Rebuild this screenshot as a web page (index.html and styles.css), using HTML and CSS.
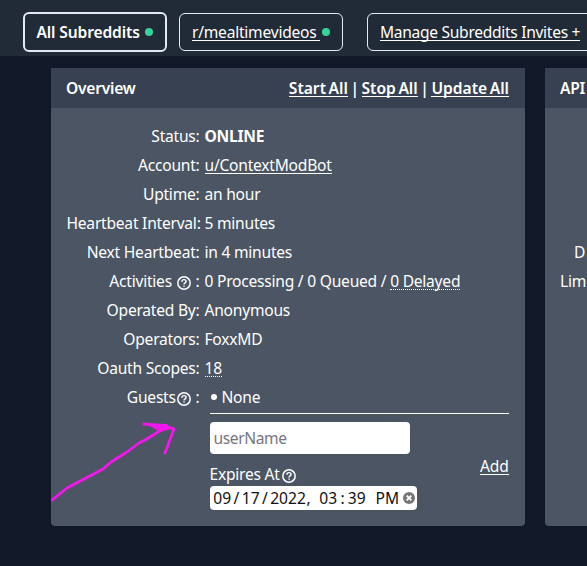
FILE: index.html
```html
<!DOCTYPE html>
<html lang="en">
<head>
<meta charset="utf-8">
<title>Overview</title>
<link rel="stylesheet" href="styles.css">
</head>
<body>
<svg class="defs" width="0" height="0"><symbol id="help" viewBox="0 0 14 14"><circle cx="7" cy="7" r="6.2" fill="none" stroke="currentColor" stroke-width="1.5"/><path d="M4.9 5.7C4.9 4.4 5.8 3.6 7 3.6S9.1 4.4 9.1 5.5C9.1 6.9 7 6.9 7 8.5" fill="none" stroke="currentColor" stroke-width="1.4"/><path d="M6.3 9.4h1.4v1.3H6.3z" fill="currentColor"/></symbol></svg>
<nav class="tabs">
  <a class="tab active"><span>All Subreddits</span><i class="dot"></i></a>
  <a class="tab"><span class="link">r/mealtimevideos&nbsp;</span><i class="dot"></i></a>
  <a class="tab invites"><span class="link">Manage Subreddits Invites +</span></a>
</nav>
<main class="panels">
  <section class="panel">
    <header class="head"><span>Overview</span><span class="actions"><a class="link">Start All</a> | <a class="link">Stop All</a> | <a class="link">Update All</a></span></header>
    <div class="rows">
      <span class="label">Status:</span><b class="value">ONLINE</b>
      <span class="label">Account:</span><span class="value"><a class="link">u/ContextModBot</a></span>
      <span class="label">Uptime:</span><span class="value">an hour</span>
      <span class="label">Heartbeat Interval:</span><span class="value">5 minutes</span>
      <span class="label">Next Heartbeat:</span><span class="value">in 4 minutes</span>
      <span class="label">Activities <svg class="help"><use href="#help"/></svg> :</span><span class="value">0 Processing / 0 Queued / <span class="dotted">0 Delayed</span></span>
      <span class="label">Operated By:</span><span class="value">Anonymous</span>
      <span class="label">Operators:</span><span class="value">FoxxMD</span>
      <span class="label">Oauth Scopes:</span><span class="value"><span class="dotted">18</span></span>
      <span class="label">Guests<svg class="help"><use href="#help"/></svg> :</span>
      <div class="guests">
        <div class="none"><i class="bullet"></i>None</div>
        <div class="form">
          <div class="fields">
            <input class="user" placeholder="userName">
            <div class="expires">Expires At<svg class="help"><use href="#help"/></svg></div>
            <div class="date"><span class="two">09</span><span class="sep">/</span><span class="two">17</span><span class="sep">/</span><span class="year">2022</span><span class="comma">,</span><span class="two">03</span><span class="sep">:</span><span class="two">39</span><span class="pm">PM</span><svg class="clear" viewBox="0 0 12 12"><circle cx="6" cy="6" r="6" fill="#777"/><path d="M3.7 3.7l4.6 4.6M8.3 3.7L3.7 8.3" stroke="#fff" stroke-width="1.7"/></svg></div>
          </div>
          <a class="link add">Add</a>
        </div>
      </div>
    </div>
    <svg class="arrow" viewBox="0 0 128 82"><path d="M1 79L16 67L52 48L60 41L76 31L88 22L94 19L112 8M93 3L117 6L123 8L114 32" fill="none" stroke="#f316ed" stroke-width="2.8" stroke-linecap="square" stroke-linejoin="round"/><path d="M94 2L116 3L118 6L124 7L109 11Z" fill="#f316ed"/></svg>
  </section>
  <section class="panel">
    <header class="head"><span>API</span></header>
    <div class="limits"><span class="delta">D</span><span>Lim</span></div>
  </section>
</main>
</body>
</html>
```
FILE: styles.css
```css
* { box-sizing: border-box; }
body { margin: 0; width: 587px; height: 566px; overflow: hidden; background: #111827; color: #fff; font: 15.6px/24px "Noto Sans", sans-serif; letter-spacing: -0.24px; white-space: nowrap; }
.defs { display: block; position: absolute; }
.tabs { height: 56px; overflow: hidden; padding: 12px 0 0 23px; display: flex; align-items: flex-start; background: #212a37; }
.tab { flex: none; display: flex; align-items: center; justify-content: space-between; width: 164px; height: 38px; margin: 1px 0 0 12px; padding: 0 12px; border: 1px solid #e5e9f5; border-radius: 6px; }
.active { width: 144px; height: 40px; margin: 0; padding: 0 12px 0 11.5px; border-width: 2px; font-weight: 600; letter-spacing: -0.14px; }
.invites { width: 240px; margin-left: 24px; letter-spacing: -0.31px; }
.dot { flex: none; width: 8px; height: 8px; border-radius: 50%; background: #34d399; }
.link { display: inline-block; height: 21px; line-height: 24px; border-bottom: 1px solid; }
.tab .link { margin-top: -3px; }
.panels { display: flex; gap: 20px; overflow: hidden; padding: 12px 0 0 51px; }
.panel { position: relative; flex: none; width: 474px; height: 458px; background: #4b5563; border-radius: 0 0 4px 4px; overflow: hidden; }
.head { display: flex; justify-content: space-between; height: 40px; padding: 8px 16px 8px 15px; background: #374151; font-weight: 600; }
.actions { word-spacing: -1.5px; letter-spacing: 0; }
.rows { display: grid; grid-template-columns: 133px 304px; column-gap: 5px; grid-template-rows: repeat(9, 29px) auto; padding: 16px 16px 0 15.5px; }
.label { text-align: right; }
.help { width: 14px; height: 14px; vertical-align: -3px; }
.label .help { margin: 0 1px; }
.dotted { display: inline-block; height: 21px; border-bottom: 1px dotted; }
.guests { margin-left: 5px; }
.none { display: flex; align-items: center; gap: 5px; height: 29px; padding: 0 0 4px 1px; border-bottom: 1px solid; }
.bullet { width: 6px; height: 6px; border-radius: 50%; background: #fff; }
.form { display: flex; justify-content: space-between; align-items: center; padding-top: 8px; }
.fields { display: flex; flex-direction: column; align-items: flex-start; }
.user { width: 200px; height: 32px; padding: 0 4px; border: 0; border-radius: 4px; background: #fff; font: inherit; letter-spacing: -0.4px; }
.user::placeholder { color: #757580; }
.expires { height: 32px; padding-top: 8px; }
.expires .help { margin-left: 2px; }
.date { display: flex; align-items: center; width: 207px; height: 24px; padding-left: 3px; border-radius: 4px; background: #fff; color: #111; letter-spacing: 0; }
.two { width: 19.5px; text-align: center; }
.sep { width: 9px; text-align: center; }
.year { width: 37px; text-align: center; }
.comma { width: 12px; }
.pm { width: 33px; padding-left: 9px; }
.clear { width: 12px; height: 12px; margin-left: 3px; }
.add { margin-top: -3px; }
.arrow { position: absolute; left: 0; top: 353px; width: 128px; height: 82px; }
.limits { padding: 132px 16px 0 15px; display: grid; row-gap: 5px; }
.delta { padding-left: 14px; }
```
